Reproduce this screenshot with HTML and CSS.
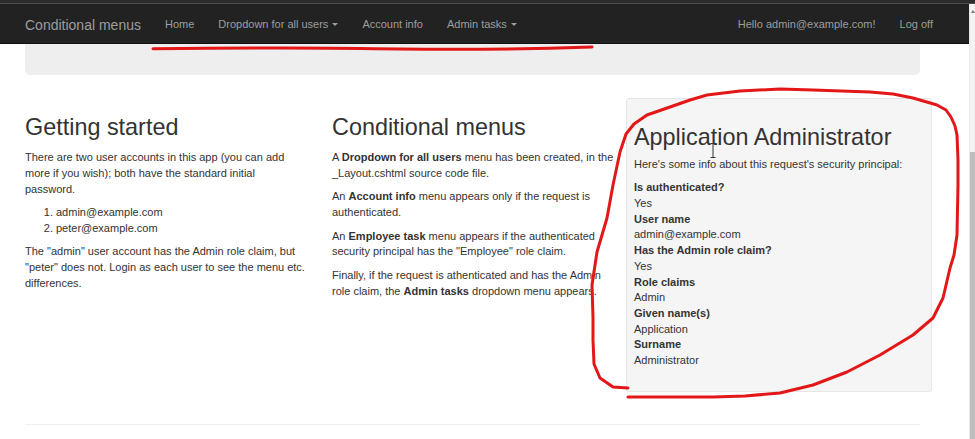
FILE: index.html
```html
<!DOCTYPE html>
<html lang="en">
<head>
<meta charset="utf-8">
<title>Conditional menus</title>
<link rel="stylesheet" href="styles.css">
</head>
<body>
<div class="topstrip"></div>
<div class="viewport">
  <div class="page">
    <nav class="navbar">
      <span class="brand">Conditional menus</span>
      <div class="nav">
        <a href="#">Home</a>
        <a href="#">Dropdown for all users<span class="caret"></span></a>
        <a href="#">Account info</a>
        <a href="#">Admin tasks<span class="caret"></span></a>
      </div>
      <div class="nav nav-right">
        <a href="#">Hello admin@example.com!</a>
        <a href="#">Log off</a>
      </div>
    </nav>
    <div class="jumbotron"></div>
    <div class="row">
      <div class="col col-a">
        <h2>Getting started</h2>
        <p>There are two user accounts in this app (you can add more if you wish); both have the standard initial password.</p>
        <ol>
          <li>admin@example.com</li>
          <li>peter@example.com</li>
        </ol>
        <p>The "admin" user account has the Admin role claim, but "peter" does not. Login as each user to see the menu etc. differences.</p>
      </div>
      <div class="col col-b">
        <h2>Conditional menus</h2>
        <p>A <b>Dropdown for all users</b> menu has been created, in the _Layout.cshtml source code file.</p>
        <p>An <b>Account info</b> menu appears only if the request is authenticated.</p>
        <p>An <b>Employee task</b> menu appears if the authenticated security principal has the "Employee" role claim.</p>
        <p>Finally, if the request is athenticated and has the Admin role claim, the <b>Admin tasks</b> dropdown menu appears.</p>
      </div>
      <div class="col col-c">
        <div class="panel">
          <h2>Application Administrator</h2>
          <p>Here's some info about this request's security principal:</p>
          <dl>
            <dt>Is authenticated?</dt>
            <dd>Yes</dd>
            <dt>User name</dt>
            <dd>admin@example.com</dd>
            <dt>Has the Admin role claim?</dt>
            <dd>Yes</dd>
            <dt>Role claims</dt>
            <dd>Admin</dd>
            <dt>Given name(s)</dt>
            <dd>Application</dd>
            <dt>Surname</dt>
            <dd>Administrator</dd>
          </dl>
        </div>
      </div>
    </div>
    <hr class="rule">
  </div>
  <div class="scrollbar">
    <div class="sb-arrow"></div>
    <div class="sb-thumb"></div>
  </div>
</div>
<svg class="ink" width="975" height="439" viewBox="0 0 975 439" aria-hidden="true">
  <path class="ink-line" d="M153,48.7 C250,47.6 330,47.4 400,49 C460,49.8 520,49.4 592,47"/>
  <polyline class="ink-line" points="628,388 613,387 600,378 594,364 593,340 593,318 592,285 597,252 602,235 607,218 613,185 620,152 626,134 634,124 647,115 670,107 690,100 707,95 740,91 780,89 813,90 870,92 893,94 913,98 937,105 946,110 951,117 955,126 957,135 958,160 958,185 957,235 954,255 950,268 943,298 933,318 913,335 880,355 847,372 813,385 780,393 745,396 713,397 628,397"/>
  <g class="cursor">
    <line x1="713" y1="144" x2="713" y2="157"/>
    <line x1="710.5" y1="143.5" x2="715.5" y2="143.5"/>
    <line x1="710.5" y1="157.5" x2="715.5" y2="157.5"/>
  </g>
</svg>
</body>
</html>
```
FILE: styles.css
```css
html, body {
  margin: 0;
  padding: 0;
}

body {
  position: relative;
  width: 975px;
  height: 439px;
  overflow: hidden;
  background: #fff;
  color: #333;
  font-family: "Liberation Sans", Arial, sans-serif;
  font-size: 11px;
  line-height: 1.428571;
}

.topstrip {
  height: 3px;
  background: #2c2c2c;
  border-bottom: 1px solid #4e4e4e;
}

.viewport {
  display: flex;
  height: 435px;
}

.page {
  flex: 1;
  min-width: 0;
  overflow: hidden;
}

/* navbar */
.navbar {
  box-sizing: border-box;
  height: 40px;
  display: flex;
  align-items: center;
  padding: 2px 24px 0 25px;
  background: #222;
  border-bottom: 1px solid #111;
}

.brand {
  font-size: 14px;
  color: #9d9d9d;
  margin-right: 12px;
  line-height: 20px;
}

.nav {
  display: flex;
  align-items: center;
}

.nav a {
  padding: 0 12px;
  color: #9d9d9d;
  text-decoration: none;
  font-size: 11px;
  display: flex;
  align-items: center;
}

.nav-right {
  margin-left: auto;
}

.caret {
  width: 0;
  height: 0;
  margin-left: 4px;
  margin-top: 1px;
  border-top: 3px solid #9d9d9d;
  border-left: 3px solid transparent;
  border-right: 3px solid transparent;
}

/* jumbotron remnant */
.jumbotron {
  height: 31px;
  margin: 0 49px 23px 25px;
  background: #eee;
  border-radius: 0 0 5px 5px;
}

/* columns */
.row {
  display: grid;
  grid-template-columns: 307px 294px 306px;
  align-items: start;
  margin-left: 25px;
}

.col-a {
  padding-right: 25px;
}

.col-b {
  padding-right: 12px;
}

.col h2 {
  font-size: 23.4px;
  font-weight: normal;
  line-height: 1.1;
  margin: 17px 0 9.5px;
  color: #333;
}

.col p {
  margin: 0 0 7.8px;
}

.col ol {
  margin: 0 0 7.8px;
  padding-left: 31px;
}

.panel {
  background: #f5f5f5;
  border: 1px solid #e6e6e6;
  border-radius: 3px;
  padding: 9px 7px 8px;
}

.col .panel h2 {
  margin: 17px 0 6.3px;
}

.panel p {
  margin: 0 0 7.6px;
}

.panel dl {
  margin: 0 0 14.6px;
}

.panel dt {
  font-weight: bold;
}

.panel dd {
  margin: 0;
}

.rule {
  margin: 32px 49px 0 25px;
  border: 0;
  border-top: 1px solid #eee;
  height: 0;
}

/* fake browser scrollbar */
.scrollbar {
  width: 6px;
  background: #f3f3f3;
  border-left: 1px solid #e8e8e8;
  box-sizing: border-box;
  display: flex;
  flex-direction: column;
}

.sb-arrow {
  margin: 6px auto 0;
  width: 0;
  height: 0;
  border-bottom: 3px solid #777;
  border-left: 2px solid transparent;
  border-right: 2px solid transparent;
}

.sb-thumb {
  margin-top: auto;
  height: 287px;
  background: #bdbdbd;
}

/* hand-drawn annotation overlay */
.ink {
  position: absolute;
  top: 0;
  left: 0;
  pointer-events: none;
}

.ink-line {
  fill: none;
  stroke: #e31717;
  stroke-width: 3;
  stroke-linecap: round;
  stroke-linejoin: round;
}

.cursor line {
  stroke: #333;
  stroke-width: 1;
}
```
